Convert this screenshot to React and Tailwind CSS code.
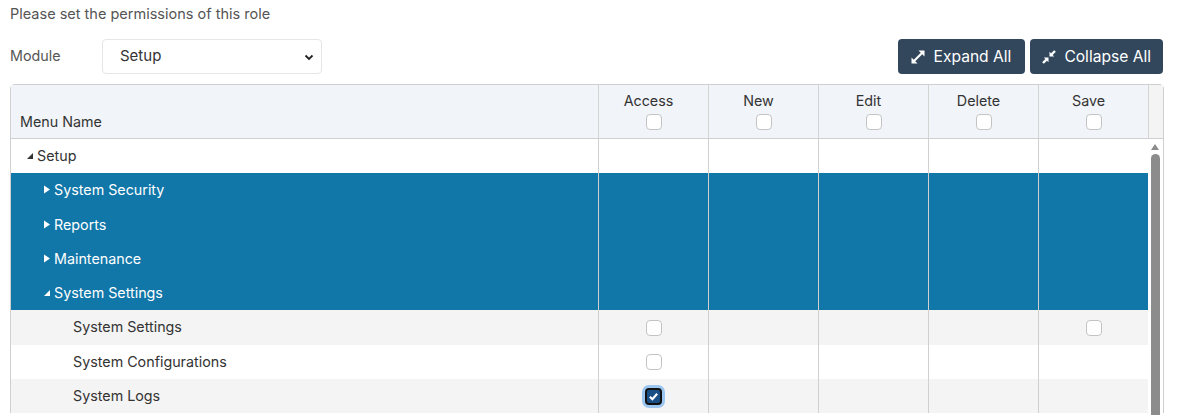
import React, { useState } from 'react';

const cols = ['Access', 'New', 'Edit', 'Delete', 'Save'];

const rows = [
    { name: 'Setup', level: 0, caret: 'open', tone: 'white' },
    { name: 'System Security', level: 1, caret: 'closed', tone: 'blue' },
    { name: 'Reports', level: 1, caret: 'closed', tone: 'blue' },
    { name: 'Maintenance', level: 1, caret: 'closed', tone: 'blue' },
    { name: 'System Settings', level: 1, caret: 'open', tone: 'blue' },
    { name: 'System Settings', level: 2, tone: 'gray', boxes: { Access: false, Save: false } },
    { name: 'System Configurations', level: 2, tone: 'white', boxes: { Access: false } },
    { name: 'System Logs', level: 2, tone: 'gray', boxes: { Access: true } },
];

function Caret({ type, light }) {
    const fill = light ? '#ffffff' : '#333333';
    if (type === 'open') {
        return (
            <svg width="8" height="8" viewBox="0 0 8 8" className="mr-[3px]">
                <polygon points="7,1 7,7 1,7" fill={fill} />
            </svg>
        );
    }
    return (
        <svg width="8" height="9" viewBox="0 0 8 9" className="mr-[3px]">
            <polygon points="1,0.5 7,4.5 1,8.5" fill={fill} />
        </svg>
    );
}

function Box({ checked }) {
    if (checked) {
        return (
            <span className="flex h-[17px] w-[17px] items-center justify-center rounded-[4px] border-2 border-[#111] bg-[#1a4f86] ring-[3px] ring-[#9cc6f0]">
                <svg width="11" height="11" viewBox="0 0 12 12">
                    <path d="M2 6.2 L4.8 9 L10 3" stroke="#fff" strokeWidth="2.4" fill="none" />
                </svg>
            </span>
        );
    }
    return <span className="block h-[16px] w-[16px] rounded-[4px] border border-[#c4c4c4] bg-white" />;
}

function ExpandIcon() {
    return (
        <svg width="14" height="14" viewBox="0 0 14 14" className="mr-[9px]">
            <line x1="3" y1="11" x2="11" y2="3" stroke="#fff" strokeWidth="2.2" />
            <polygon points="13.5,0.5 13.5,6.5 7.5,0.5" fill="#fff" />
            <polygon points="0.5,13.5 0.5,7.5 6.5,13.5" fill="#fff" />
        </svg>
    );
}

function CollapseIcon() {
    return (
        <svg width="14" height="14" viewBox="0 0 14 14" className="mr-[8px]">
            <line x1="1" y1="13" x2="4.5" y2="9.5" stroke="#fff" strokeWidth="2.4" />
            <polygon points="6.5,7.5 1.8,7.5 6.5,12.2" fill="#fff" />
            <line x1="13" y1="1" x2="9.5" y2="4.5" stroke="#fff" strokeWidth="2.4" />
            <polygon points="7.5,6.5 12.2,6.5 7.5,1.8" fill="#fff" />
        </svg>
    );
}

export default function App() {
    const [module, setModule] = useState('Setup');

    return (
        <div className="h-[415px] w-[1177px] overflow-hidden bg-white px-[10px] font-['Inter',sans-serif] text-[14.3px] text-[#333]">
            <p className="pt-[4px] text-[14.5px] leading-[20px] text-[#555]">Please set the permissions of this role</p>

            <div className="mt-[15px] flex items-start justify-between">
                <div className="flex items-start">
                    <label className="w-[92px] pt-[6px] text-[14.3px] text-[#555]">Module</label>
                    <div className="relative">
                        <select
                            value={module}
                            onChange={(e) => setModule(e.target.value)}
                            className="h-[35px] w-[220px] appearance-none rounded-[4px] border border-[#e6e6e6] bg-white pl-[17px] text-[15px] text-[#333] outline-none"
                        >
                            <option>Setup</option>
                        </select>
                        <svg width="10" height="7" viewBox="0 0 10 7" className="pointer-events-none absolute right-[8px] top-[15px]">
                            <path d="M1.5 1.5 L5 5 L8.5 1.5" stroke="#222" strokeWidth="1.8" fill="none" />
                        </svg>
                    </div>
                </div>
                <div className="mr-[4px] flex gap-[5px]">
                    <button className="flex h-[35px] items-center rounded-[4px] bg-[#32475c] pl-[13px] pr-[14px] text-[15.6px] text-white">
                        <ExpandIcon />Expand All
                    </button>
                    <button className="flex h-[35px] items-center rounded-[4px] bg-[#32475c] px-[12px] text-[15.6px] text-white">
                        <CollapseIcon />Collapse All
                    </button>
                </div>
            </div>

            <div className="mt-[10px] w-[1154px] rounded-t-[5px] border border-b-0 border-[#cfcfcf]">
                <div className="grid h-[54px] grid-cols-[587px_110px_110px_110px_110px_110px_15px] border-b border-[#cfcfcf] bg-[#f1f4f8]">
                    <div className="flex items-end pb-[6px] pl-[9px] text-[#333]">Menu Name</div>
                    {cols.map((c) => (
                        <div key={c} className="flex flex-col items-center border-l border-[#d4d4d4] pt-[7px]">
                            <span className="pr-[10px] leading-[17px]">{c}</span>
                            <span className="mt-[5px]"><Box /></span>
                        </div>
                    ))}
                    <div className="border-l border-[#d4d4d4] bg-[#f4f4f4]" />
                </div>

                <div className="flex">
                    <div className="flex-1">
                        {rows.map((r, i) => {
                            const bg = r.tone === 'blue' ? 'bg-[#1176a8]' : r.tone === 'gray' ? 'bg-[#f4f4f4]' : 'bg-white';
                            const pad = r.level === 0 ? 'pl-[15px]' : r.level === 1 ? 'pl-[32px]' : 'pl-[62px]';
                            return (
                                <div key={i} className={`grid h-[34.3px] grid-cols-[587px_110px_110px_110px_110px_110px] ${bg}`}>
                                    <div className={`flex items-center pb-[1px] ${pad} ${r.tone === 'blue' ? 'text-white' : 'text-[#333]'}`}>
                                        {r.caret && <Caret type={r.caret} light={r.tone === 'blue'} />}
                                        <span>{r.name}</span>
                                    </div>
                                    {cols.map((c) => (
                                        <div key={c} className="flex items-center justify-center border-l border-[#d0d0d0]">
                                            {r.boxes && c in r.boxes && <Box checked={r.boxes[c]} />}
                                        </div>
                                    ))}
                                </div>
                            );
                        })}
                    </div>
                    <div className="relative w-[15px] bg-white">
                        <svg width="8" height="6" viewBox="0 0 8 6" className="absolute left-[3px] top-[5px]">
                            <polygon points="4,0 8,6 0,6" fill="#8c8c8c" />
                        </svg>
                        <div className="absolute left-[3px] top-[15px] h-[300px] w-[9px] rounded-t-full bg-[#8c8c8c]" />
                    </div>
                </div>
            </div>
        </div>
    );
}
